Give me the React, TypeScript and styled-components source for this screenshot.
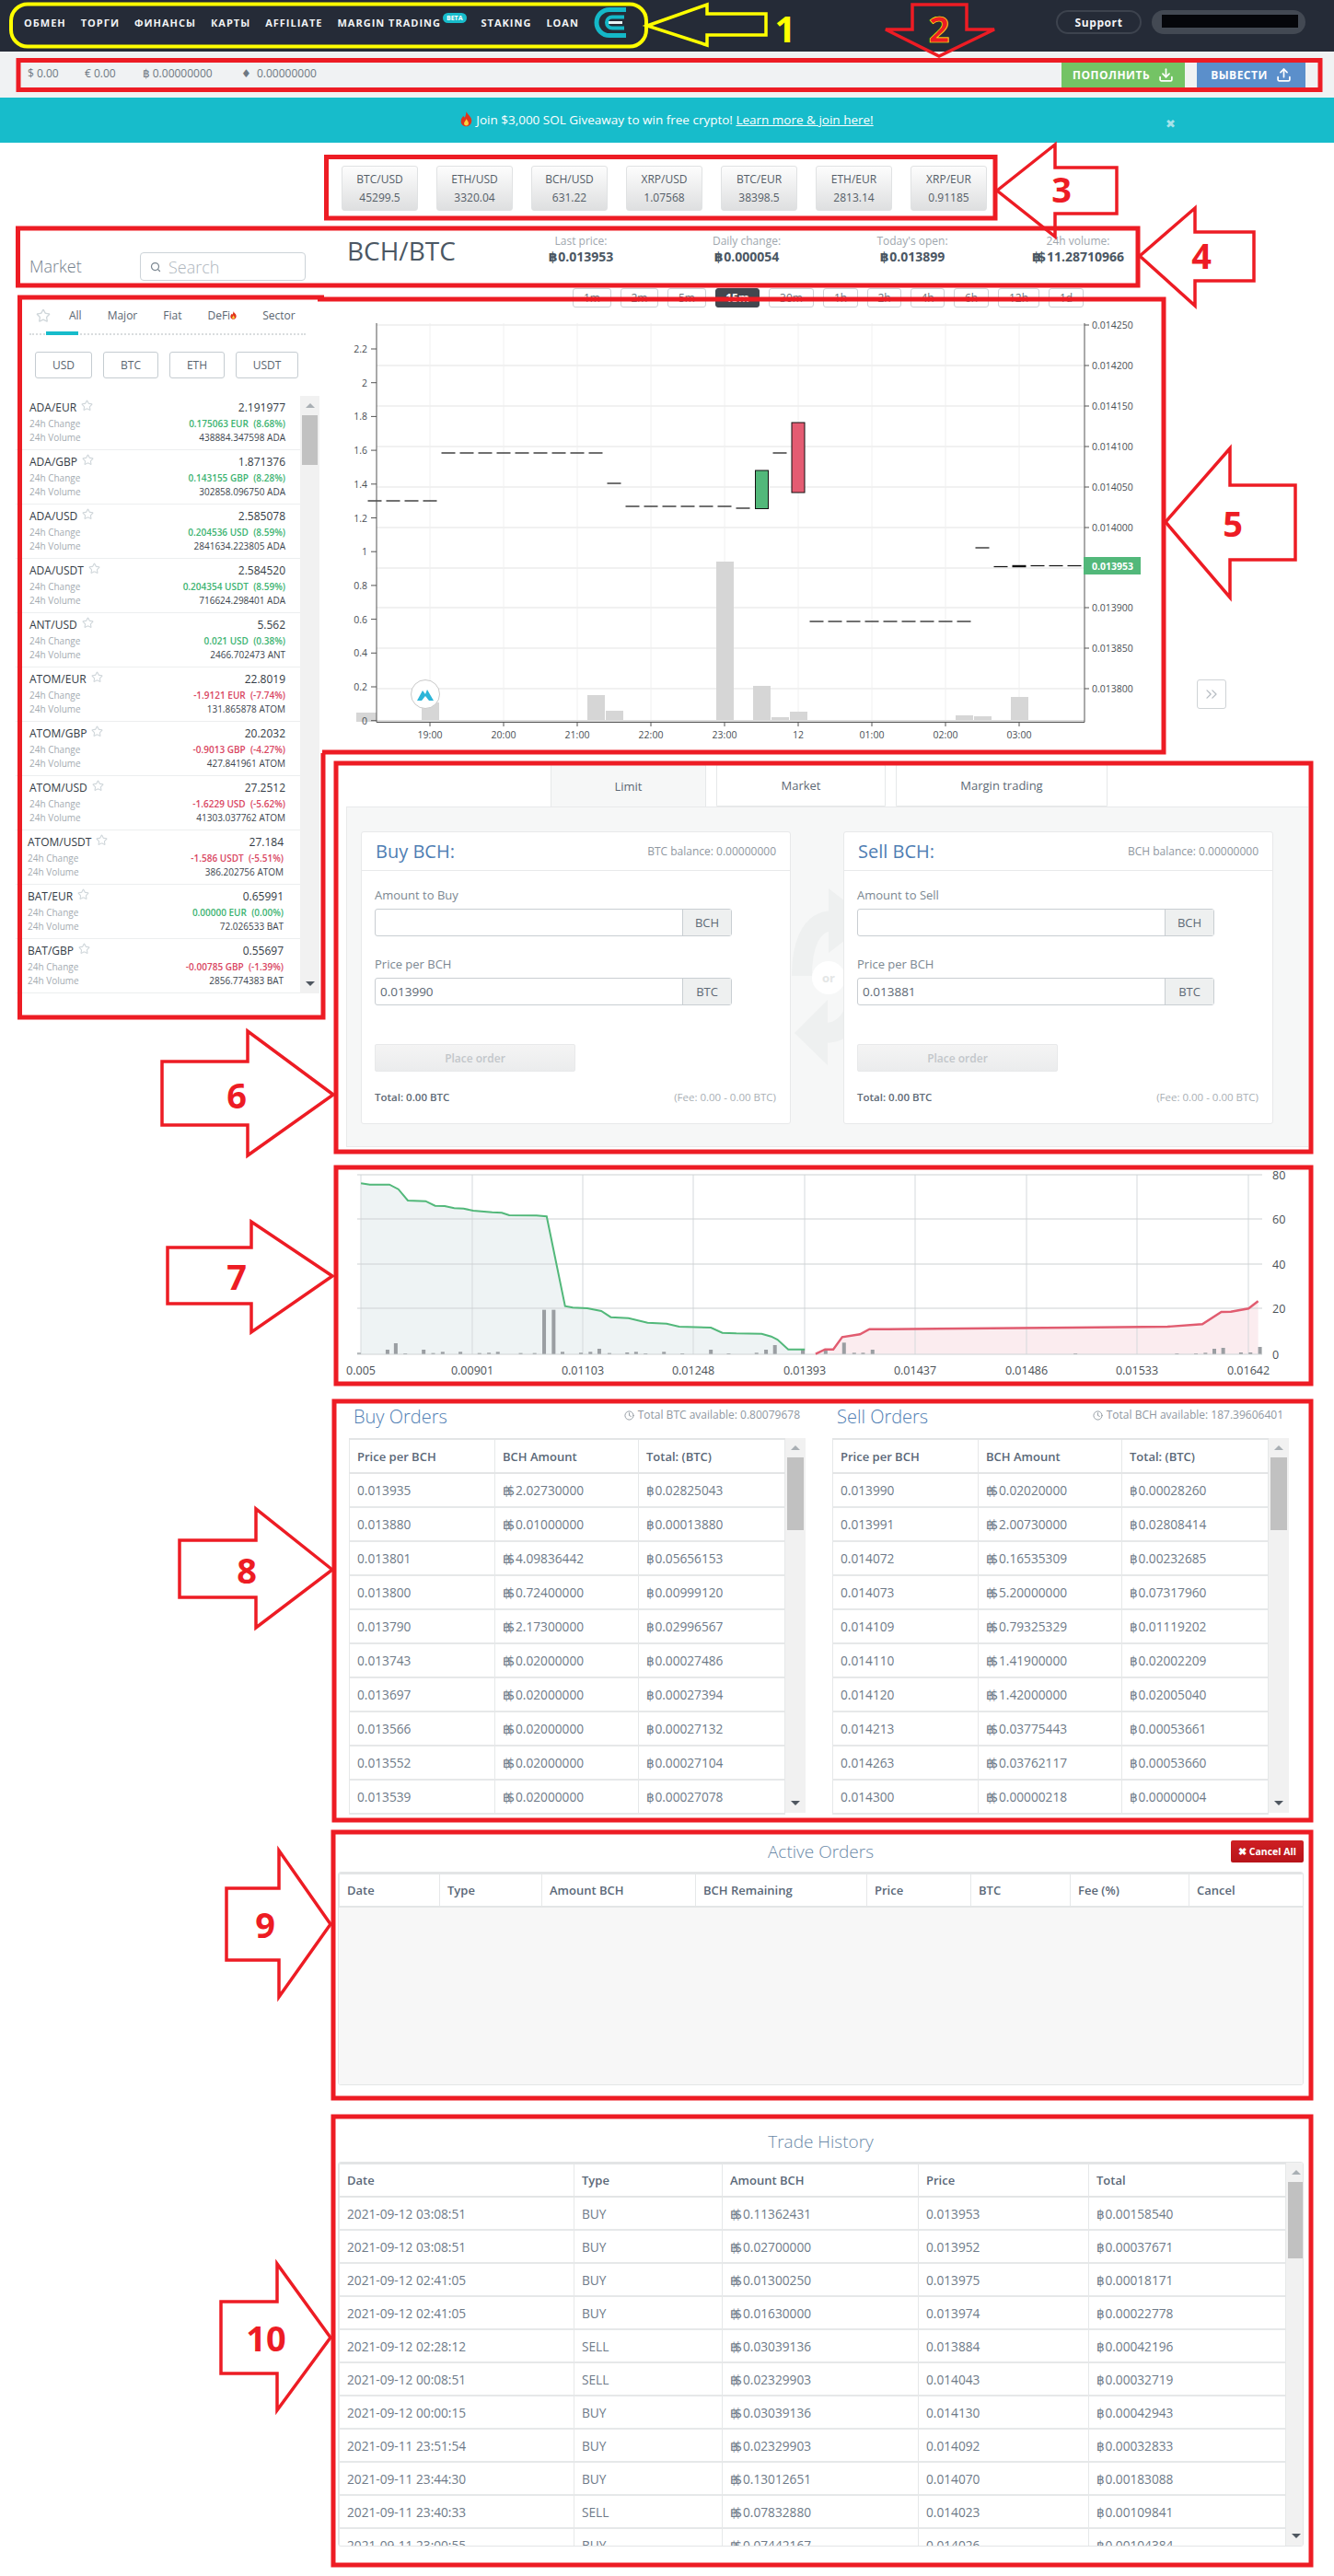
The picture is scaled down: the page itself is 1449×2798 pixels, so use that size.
import styled, { createGlobalStyle } from "styled-components";
import { ChevronsRight, Clock, Download, Search, Star, Upload } from "lucide-react";

const NAV = ["ОБМЕН", "ТОРГИ", "ФИНАНСЫ", "КАРТЫ", "AFFILIATE", "MARGIN TRADING", "STAKING", "LOAN"];
const TICKERS = [
  ["BTC/USD", "45299.5"],
  ["ETH/USD", "3320.04"],
  ["BCH/USD", "631.22"],
  ["XRP/USD", "1.07568"],
  ["BTC/EUR", "38398.5"],
  ["ETH/EUR", "2813.14"],
  ["XRP/EUR", "0.91185"],
];
const FRAMES = [
  ["1m", 42],
  ["2m", 41],
  ["5m", 42],
  ["15m", 48],
  ["30m", 49],
  ["1h", 38],
  ["2h", 37],
  ["4h", 37],
  ["6h", 38],
  ["12h", 45],
  ["1d", 38],
] as const;
const MARKETS = [
  ["ADA/EUR", "2.191977", "0.175063 EUR", "(8.68%)", "438884.347598 ADA"],
  ["ADA/GBP", "1.871376", "0.143155 GBP", "(8.28%)", "302858.096750 ADA"],
  ["ADA/USD", "2.585078", "0.204536 USD", "(8.59%)", "2841634.223805 ADA"],
  ["ADA/USDT", "2.584520", "0.204354 USDT", "(8.59%)", "716624.298401 ADA"],
  ["ANT/USD", "5.562", "0.021 USD", "(0.38%)", "2466.702473 ANT"],
  ["ATOM/EUR", "22.8019", "-1.9121 EUR", "(-7.74%)", "131.865878 ATOM"],
  ["ATOM/GBP", "20.2032", "-0.9013 GBP", "(-4.27%)", "427.841961 ATOM"],
  ["ATOM/USD", "27.2512", "-1.6229 USD", "(-5.62%)", "41303.037762 ATOM"],
  ["ATOM/USDT", "27.184", "-1.586 USDT", "(-5.51%)", "386.202756 ATOM"],
  ["BAT/EUR", "0.65991", "0.00000 EUR", "(0.00%)", "72.026533 BAT"],
  ["BAT/GBP", "0.55697", "-0.00785 GBP", "(-1.39%)", "2856.774383 BAT"],
];
const BUY_ORDERS = [
  ["0.013935", "2.02730000", "0.02825043"],
  ["0.013880", "0.01000000", "0.00013880"],
  ["0.013801", "4.09836442", "0.05656153"],
  ["0.013800", "0.72400000", "0.00999120"],
  ["0.013790", "2.17300000", "0.02996567"],
  ["0.013743", "0.02000000", "0.00027486"],
  ["0.013697", "0.02000000", "0.00027394"],
  ["0.013566", "0.02000000", "0.00027132"],
  ["0.013552", "0.02000000", "0.00027104"],
  ["0.013539", "0.02000000", "0.00027078"],
];
const SELL_ORDERS = [
  ["0.013990", "0.02020000", "0.00028260"],
  ["0.013991", "2.00730000", "0.02808414"],
  ["0.014072", "0.16535309", "0.00232685"],
  ["0.014073", "5.20000000", "0.07317960"],
  ["0.014109", "0.79325329", "0.01119202"],
  ["0.014110", "1.41900000", "0.02002209"],
  ["0.014120", "1.42000000", "0.02005040"],
  ["0.014213", "0.03775443", "0.00053661"],
  ["0.014263", "0.03762117", "0.00053660"],
  ["0.014300", "0.00000218", "0.00000004"],
];
const HISTORY = [
  ["2021-09-12 03:08:51", "BUY", "0.11362431", "0.013953", "0.00158540"],
  ["2021-09-12 03:08:51", "BUY", "0.02700000", "0.013952", "0.00037671"],
  ["2021-09-12 02:41:05", "BUY", "0.01300250", "0.013975", "0.00018171"],
  ["2021-09-12 02:41:05", "BUY", "0.01630000", "0.013974", "0.00022778"],
  ["2021-09-12 02:28:12", "SELL", "0.03039136", "0.013884", "0.00042196"],
  ["2021-09-12 00:08:51", "SELL", "0.02329903", "0.014043", "0.00032719"],
  ["2021-09-12 00:00:15", "BUY", "0.03039136", "0.014130", "0.00042943"],
  ["2021-09-11 23:51:54", "BUY", "0.02329903", "0.014092", "0.00032833"],
  ["2021-09-11 23:44:30", "BUY", "0.13012651", "0.014070", "0.00183088"],
  ["2021-09-11 23:40:33", "SELL", "0.07832880", "0.014023", "0.00109841"],
  ["2021-09-11 23:00:55", "BUY", "0.07442167", "0.014026", "0.00104384"],
];
const ACTIVE_COLS = [
  ["Date", 109],
  ["Type", 111],
  ["Amount BCH", 167],
  ["BCH Remaining", 186],
  ["Price", 113],
  ["BTC", 108],
  ["Fee (%)", 129],
  ["Cancel", 126],
] as const;

// candle chart, in page coordinates
const GRID_Y = [353, 397, 441, 485, 529, 573, 617, 660, 704, 748];
const PRICE_LABELS = ["0.014250", "0.014200", "0.014150", "0.014100", "0.014050", "0.014000", "", "0.013900", "0.013850", "0.013800"];
const HOURS = [
  [468, "19:00"],
  [548, "20:00"],
  [628, "21:00"],
  [708, "22:00"],
  [788, "23:00"],
  [868, "12"],
  [948, "01:00"],
  [1028, "02:00"],
  [1108, "03:00"],
] as const;
const VOLUME_LABELS = ["2.2", "2", "1.8", "1.6", "1.4", "1.2", "1", "0.8", "0.6", "0.4", "0.2", "0"];
const VOLUME_BARS = [
  [388, 774, 22],
  [459, 763, 19],
  [639, 755, 19],
  [659, 772, 19],
  [779, 610, 19],
  [819, 745, 19],
  [839, 779, 19],
  [859, 773, 19],
  [1039, 777, 19],
  [1059, 778, 19],
  [1099, 757, 19],
];
const range = (from: number, count: number) => Array.from({ length: count }, (_, i) => from + i * 20);
const DASHES: [number, number, number?][] = [
  [408, 544], [428, 544], [448, 544], [468, 544],
  ...range(488, 9).map((x): [number, number] => [x, 492]),
  [668, 525],
  ...range(688, 6).map((x): [number, number] => [x, 550]),
  [808, 552],
  [848, 492],
  ...range(888, 9).map((x): [number, number] => [x, 675]),
  [1068, 595],
  [1088, 615.5],
  [1108, 615, 2.4],
  [1128, 614.5], [1148, 614.5], [1168, 614.5],
];

// depth chart points as read off the crop, mapped to the page below
const toDepth = (pts: number[][]) => pts.map(([x, y]) => `${(360 + x / 1.452).toFixed(1)},${(1260 + y / 3).toFixed(1)}`).join(" ");
const GREEN_LINE = [[48, 76], [62, 80], [93, 80], [107, 95], [122, 132], [150, 134], [165, 149], [180, 150], [195, 157], [210, 158], [225, 165], [255, 170], [270, 172], [282, 180], [325, 181], [341, 184], [370, 476], [382, 481], [405, 483], [427, 492], [442, 512], [470, 515], [500, 530], [530, 533], [550, 543], [600, 546], [618, 563], [640, 565], [680, 566], [695, 575], [705, 585], [722, 617], [748, 617]];
const RED_LINE = [[765, 632], [780, 617], [793, 617], [807, 577], [835, 568], [850, 551], [880, 551], [1000, 549], [1170, 546], [1320, 543], [1375, 535], [1405, 495], [1420, 494], [1448, 484], [1463, 460]];
const DEPTH_BARS = [[45, 628], [90, 618], [103, 597], [118, 630], [147, 618], [162, 629], [177, 625], [205, 625], [235, 629], [250, 628], [264, 625], [300, 629], [322, 629], [337, 488], [352, 488], [366, 625], [395, 628], [410, 625], [424, 615], [440, 629], [468, 627], [482, 625], [497, 630], [526, 625], [555, 630], [600, 618], [628, 630], [672, 628], [687, 618], [701, 603], [745, 618], [781, 620], [810, 595], [826, 628], [840, 628], [855, 618], [1175, 630], [1335, 630], [1365, 630], [1380, 628], [1394, 615], [1408, 612], [1436, 627], [1451, 627], [1466, 609]];
const DEPTH_X = [
  [393, "0.005"],
  [514, "0.00901"],
  [634, "0.01103"],
  [754, "0.01248"],
  [875, "0.01393"],
  [995, "0.01437"],
  [1116, "0.01486"],
  [1236, "0.01533"],
  [1357, "0.01642"],
] as const;
const DEPTH_Y = [
  [1276, "80"],
  [1324, "60"],
  [1373, "40"],
  [1421, "20"],
  [1471, "0"],
] as const;

const ARROWS = [
  "1266,567 1336,487 1336,527 1407,527 1407,608 1336,608 1336,649",
  "1083,207 1146,157 1146,182 1213,182 1213,232 1146,232 1146,257",
  "1238,278 1298,226 1298,252 1362,252 1362,305 1298,305 1298,332",
  "962,32 991,32 991,5 1050,5 1050,32 1080,32 1020,61",
  "362,1189 269,1120 269,1153 176,1153 176,1222 269,1222 269,1255",
  "361,1386 273,1327 273,1355 182,1355 182,1416 273,1416 273,1447",
  "361,1705 278,1639 278,1673 195,1673 195,1735 278,1735 278,1768",
  "359,2090 303,2010 303,2051 246,2051 246,2129 303,2129 303,2169",
  "359,2539 301,2459 301,2500 240,2500 240,2578 301,2578 301,2618",
];
const MARKS = [
  [1153, 205, "3"],
  [1305, 277, "4"],
  [1339, 568, "5"],
  [257, 1189, "6"],
  [257, 1386, "7"],
  [268, 1705, "8"],
  [288, 2090, "9"],
  [289, 2539, "10"],
] as const;

const GlobalStyle = createGlobalStyle`
  * {
    box-sizing: border-box;
  }
  html, body {
    margin: 0;
    padding: 0;
    background: #fff;
  }
  body {
    font-family: "Open Sans", "Noto Sans", "DejaVu Sans", sans-serif;
    color: #5f6b78;
  }
  #root {
    width: 1449px;
    height: 2798px;
    overflow: hidden;
  }
`;

const Flame = ({ size }: { size: number }) => (
  <svg width={size} height={size * 1.25} viewBox="0 0 16 20">
    <path d="M8 0c1 4 6 6 7 11 1 5-3 9-7 9s-8-3-7-8c0-3 2-4 3-6 1 1 1 2 2 2 1-2 2-5 2-8z" fill="#e0341c" />
    <path d="M8 10c1 2 3 3 3 6 0 2-1 3-3 3s-3-1-3-3c0-2 2-3 3-6z" fill="#fbd13c" />
  </svg>
);

const Logo = () => (
  <svg width="36" height="33" viewBox="0 0 36 33">
    <path d="M35 2.5H17a14 14 0 0 0 0 28h18" fill="none" stroke="#14b8c8" strokeWidth="5" />
    <path d="M33 10.5H20a6 6 0 0 0 0 12h13" fill="none" stroke="#14b8c8" strokeWidth="4" />
    <path d="M16 16.5h15" stroke="#e8f4f6" strokeWidth="3" />
  </svg>
);

const BtcAmount = ({ value }: { value: string }) => (
  <>
    <Coin>฿</Coin>
    {value}
  </>
);

const BchAmount = ({ value }: { value: string }) => (
  <>
    <Coin $tight>฿</Coin>
    <Coin>$</Coin>
    {value}
  </>
);

const Scrollbar = ({ $width, $thumb }: { $width: number; $thumb: number }) => (
  <ScrollTrack $width={$width}>
    <ScrollArrow $up />
    <ScrollThumb $height={$thumb} />
    <ScrollArrow />
  </ScrollTrack>
);

const OrderBook = ({ title, note, rows }: { title: string; note: string; rows: string[][] }) => (
  <div>
    <BookHead>
      <PanelTitle>{title}</PanelTitle>
      <BookNote>
        <Clock size={11} />
        {note}
      </BookNote>
    </BookHead>
    <BookBody>
      <DataTable $width={473}>
        <colgroup>
          <col width={158} />
          <col width={156} />
          <col width={159} />
        </colgroup>
        <thead>
          <tr>
            <HeadCell $height={37}>Price per BCH</HeadCell>
            <HeadCell $height={37}>BCH Amount</HeadCell>
            <HeadCell $height={37}>Total: (BTC)</HeadCell>
          </tr>
        </thead>
        <tbody>
          {rows.map((row) => (
            <tr key={row[0]}>
              <Cell $height={37}>{row[0]}</Cell>
              <Cell $height={37}>
                <BchAmount value={row[1]} />
              </Cell>
              <Cell $height={37}>
                <BtcAmount value={row[2]} />
              </Cell>
            </tr>
          ))}
        </tbody>
      </DataTable>
      <Scrollbar $width={22} $thumb={79} />
    </BookBody>
  </div>
);

const OrderCard = ({ side, balance, price, quote }: { side: string; balance: string; price: string; quote: string }) => (
  <Card>
    <CardHead>
      <CardTitle>{side} BCH:</CardTitle>
      <CardNote>{balance}</CardNote>
    </CardHead>
    <CardBody>
      <FieldLabel>Amount to {side}</FieldLabel>
      <Field>
        <FieldInput readOnly value="" />
        <FieldUnit>BCH</FieldUnit>
      </Field>
      <FieldLabel>Price per BCH</FieldLabel>
      <Field>
        <FieldInput readOnly value={price} />
        <FieldUnit>{quote}</FieldUnit>
      </Field>
      <PlaceOrder disabled>Place order</PlaceOrder>
      <CardFoot>
        <TotalText>Total: 0.00 BTC</TotalText>
        <FeeText>(Fee: 0.00 - 0.00 BTC)</FeeText>
      </CardFoot>
    </CardBody>
  </Card>
);

const CandleChart = () => (
  <svg width="1087" height="496" viewBox="363 334 1087 496">
    {GRID_Y.map((y) => (
      <line key={y} x1="410" x2="1179" y1={y} y2={y} stroke="#ececec" strokeWidth="1.5" />
    ))}
    {HOURS.map(([x]) => (
      <line key={x} x1={x} x2={x} y1="351" y2="784" stroke="#f0f0f0" />
    ))}
    {VOLUME_BARS.map(([x, y, w]) => (
      <rect key={x} x={x} y={y} width={w} height={784 - y} fill="#d6d6d6" />
    ))}
    <line x1="410" x2="1179" y1="783" y2="783" stroke="#dcdcdc" strokeWidth="2" />
    {DASHES.map(([x, y, w]) => (
      <line key={x} x1={x - 7.5} x2={x + 7.5} y1={y} y2={y} stroke="#111" strokeWidth={w ?? 1.2} />
    ))}
    <rect x="821.5" y="511" width="14" height="41.5" fill="#52b87a" stroke="#111" />
    <rect x="861" y="459" width="14" height="76" fill="#e45c72" stroke="#111" />
    <path d="M410 351V784.5H1179V351" fill="none" stroke="#555" />
    {VOLUME_LABELS.map((label, i) => (
      <g key={label}>
        <line x1="404" x2="410" y1={379 + i * 36.7} y2={379 + i * 36.7} stroke="#555" />
        <AxisText x="400" y={379 + i * 36.7} textAnchor="end">
          {label}
        </AxisText>
      </g>
    ))}
    {GRID_Y.map((y, i) =>
      PRICE_LABELS[i] ? (
        <g key={y}>
          <line x1="1179" x2="1184" y1={y} y2={y} stroke="#555" />
          <AxisText x="1187" y={y}>
            {PRICE_LABELS[i]}
          </AxisText>
        </g>
      ) : null
    )}
    {HOURS.map(([x, label]) => (
      <g key={label}>
        <line x1={x} x2={x} y1="784" y2="789" stroke="#555" />
        <AxisText x={x} y="798" textAnchor="middle">
          {label}
        </AxisText>
      </g>
    ))}
    <rect x="1178" y="605" width="62" height="19" fill="#52b87a" />
    <PriceTag x="1187" y="614.5">
      0.013953
    </PriceTag>
    <circle cx="463" cy="754" r="15.5" fill="#fff" stroke="#c9c9c9" />
    <path d="M454 761l6-11 3 4 2-5 7 12z" fill="#2cb5d8" />
    <path d="M459 761l4-5 4 5z" fill="#fff" />
  </svg>
);

const DepthChart = () => (
  <svg width="1087" height="248" viewBox="363 1262 1087 248">
    <polygon points={`${toDepth(GREEN_LINE)} ${toDepth([[748, 632], [48, 632]])}`} fill="#eef3f4" />
    <polygon points={`${toDepth(RED_LINE)} ${toDepth([[1463, 632]])}`} fill="#fbecef" />
    {DEPTH_X.map(([x]) => (
      <line key={x} x1={x} x2={x} y1="1276" y2="1471" stroke="#d5d9dc" />
    ))}
    {DEPTH_Y.map(([y]) => (
      <line key={y} x1="389" x2="1372" y1={y} y2={y} stroke="#cdd1d4" strokeWidth="1.2" />
    ))}
    {DEPTH_BARS.map(([x, y]) => (
      <rect key={x} x={360 + (x - 3) / 1.452} y={1260 + y / 3} width="4" height={(632 - y) / 3} fill="#9a9ea2" />
    ))}
    <polyline points={toDepth(GREEN_LINE)} fill="none" stroke="#52b87a" strokeWidth="2" />
    <polyline points={toDepth(RED_LINE)} fill="none" stroke="#e15c70" strokeWidth="2.4" />
    {DEPTH_Y.map(([y, label]) => (
      <DepthText key={label} x="1383" y={y}>
        {label}
      </DepthText>
    ))}
    {DEPTH_X.map(([x, label]) => (
      <DepthText key={label} x={x} y="1488" textAnchor="middle">
        {label}
      </DepthText>
    ))}
  </svg>
);

const Notes = () => (
  <NoteLayer width="1449" height="2798" viewBox="0 0 1449 2798">
    <rect x="12" y="4.5" width="690" height="46" rx="18" fill="none" stroke="#ffff00" strokeWidth="4" />
    <polygon points="703,28 768,5 768,15 832,15 832,38 768,38 768,49" fill="none" stroke="#ffff00" strokeWidth="3.5" />
    <NoteMark x="853" y="30" fontSize="40" fill="#ffff00">
      1
    </NoteMark>
    <NoteFrame x="20" y="65.5" width="1414" height="32" />
    <NoteFrame x="354.5" y="170.5" width="726.5" height="66.5" />
    <NoteFrame x="19.5" y="248" width="1216.5" height="62" />
    <NotePath d="M352 323H21.5V1105H351V818" />
    <NotePath d="M345 325H1264V817H350" />
    <NoteFrame x="365" y="829" width="1059" height="422" />
    <NoteFrame x="365" y="1268" width="1059" height="235" />
    <NoteFrame x="363" y="1522" width="1061" height="455" />
    <NoteFrame x="362" y="1990" width="1062" height="289" />
    <NoteFrame x="362" y="2299" width="1062" height="487" />
    {ARROWS.map((points) => (
      <NoteArrow key={points} points={points} />
    ))}
    <NoteMark x="1020" y="30" fontSize="40" fill="#ed1c24" stroke="#ffff00" strokeWidth="0.7">
      2
    </NoteMark>
    {MARKS.map(([x, y, label]) => (
      <NoteMark key={label} x={x} y={y} fontSize="38" fill="#ed1c24">
        {label}
      </NoteMark>
    ))}
  </NoteLayer>
);

const App = () => (
  <Page>
    <GlobalStyle />
    <TopBar>
      <NavList>
        {NAV.map((item) => (
          <NavItem key={item}>
            {item}
            {item === "MARGIN TRADING" && <BetaBadge>BETA</BetaBadge>}
          </NavItem>
        ))}
        <Logo />
      </NavList>
      <TopRight>
        <SupportButton>Support</SupportButton>
        <AccountPill>
          <AccountMask />
        </AccountPill>
      </TopRight>
    </TopBar>

    <BalanceBar>
      <Balances>
        <BalanceItem $w={62}>$ 0.00</BalanceItem>
        <BalanceItem $w={63}>€ 0.00</BalanceItem>
        <BalanceItem $w={107}>฿ 0.00000000</BalanceItem>
        <BalanceItem $w={100}>♦ &nbsp;0.00000000</BalanceItem>
      </Balances>
      <BalanceActions>
        <MoneyButton $color="#74c365" $w={134}>
          ПОПОЛНИТЬ <Download size={17} strokeWidth={2.4} />
        </MoneyButton>
        <MoneyButton $color="#5b8fcb" $w={118}>
          ВЫВЕСТИ <Upload size={17} strokeWidth={2.4} />
        </MoneyButton>
      </BalanceActions>
    </BalanceBar>

    <Banner>
      <Flame size={13} />
      <span>
        Join $3,000 SOL Giveaway to win free crypto! <BannerLink>Learn more &amp; join here!</BannerLink>
      </span>
      <BannerClose>✖</BannerClose>
    </Banner>

    <Tickers>
      {TICKERS.map(([pair, price]) => (
        <Ticker key={pair}>
          <span>{pair}</span>
          <span>{price}</span>
        </Ticker>
      ))}
    </Tickers>

    <Main>
      <Sidebar>
        <MarketHead>
          <MarketTitle>Market</MarketTitle>
          <SearchBox>
            <Search size={12} strokeWidth={2.5} />
            <SearchInput placeholder="Search" />
          </SearchBox>
        </MarketHead>
        <MarketTabs>
          <Star size={16} color="#cfd6da" />
          <MarketTab>All</MarketTab>
          <MarketTab>Major</MarketTab>
          <MarketTab>Fiat</MarketTab>
          <MarketTab>
            DeFi
            <Flame size={7} />
          </MarketTab>
          <MarketTab>Sector</MarketTab>
        </MarketTabs>
        <Filters>
          <FilterButton $w={62}>USD</FilterButton>
          <FilterButton $w={60}>BTC</FilterButton>
          <FilterButton $w={60}>ETH</FilterButton>
          <FilterButton $w={68}>USDT</FilterButton>
        </Filters>
        <MarketList>
          <div>
            {MARKETS.map(([pair, price, change, pct, volume], i) => (
              <MarketRow key={pair} $shifted={i > 7}>
                <RowLine $height={18}>
                  <PairName>
                    {pair}
                    <Star size={13} color="#cfd6da" />
                  </PairName>
                  <PairPrice>{price}</PairPrice>
                </RowLine>
                <RowLine $height={17}>
                  <RowLabel>24h Change</RowLabel>
                  <RowChange $down={change.startsWith("-")}>
                    {change}&nbsp; {pct}
                  </RowChange>
                </RowLine>
                <RowLine $height={14}>
                  <RowLabel>24h Volume</RowLabel>
                  <RowVolume>{volume}</RowVolume>
                </RowLine>
              </MarketRow>
            ))}
          </div>
          <Scrollbar $width={21} $thumb={54} />
        </MarketList>
      </Sidebar>

      <Content>
        <PairHead>
          <PairTitle>BCH/BTC</PairTitle>
          <Stat>
            <StatLabel>Last price:</StatLabel>
            <StatValue>
              <BtcAmount value="0.013953" />
            </StatValue>
          </Stat>
          <Stat>
            <StatLabel>Daily change:</StatLabel>
            <StatValue>
              <BtcAmount value="0.000054" />
            </StatValue>
          </Stat>
          <Stat>
            <StatLabel>Today's open:</StatLabel>
            <StatValue>
              <BtcAmount value="0.013899" />
            </StatValue>
          </Stat>
          <Stat>
            <StatLabel>24h volume:</StatLabel>
            <StatValue>
              <BchAmount value="11.28710966" />
            </StatValue>
          </Stat>
        </PairHead>

        <Frames>
          {FRAMES.map(([frame, w]) => (
            <FrameButton key={frame} $w={w} $active={frame === "15m"}>
              {frame}
            </FrameButton>
          ))}
        </Frames>

        <ChartArea>
          <CandleChart />
          <ExpandButton>
            <ChevronsRight size={20} strokeWidth={1.5} />
          </ExpandButton>
        </ChartArea>

        <FormTabs>
          <FormTab $active $w={169}>
            Limit
          </FormTab>
          <FormTab $w={184}>Market</FormTab>
          <FormTab $w={230}>Margin trading</FormTab>
        </FormTabs>
        <FormPanel>
          <Watermark width="110" height="220" viewBox="850 950 110 220">
            <path d="M905 1000c-25 0-34 28-34 60" fill="none" stroke="#eef0f0" strokeWidth="22" />
            <polygon points="900,965 945,1000 900,1035" fill="#eef0f0" />
            <polygon points="899,1086 863,1122 899,1157" fill="#eef0f0" />
            <path d="M895 1122c30 0 38-28 38-60" fill="none" stroke="#eef0f0" strokeWidth="22" />
            <ellipse cx="900" cy="1062" rx="18" ry="18" fill="#fff" />
            <WatermarkText x="900" y="1062">
              or
            </WatermarkText>
          </Watermark>
          <OrderCard side="Buy" balance="BTC balance: 0.00000000" price="0.013990" quote="BTC" />
          <OrderCard side="Sell" balance="BCH balance: 0.00000000" price="0.013881" quote="BTC" />
        </FormPanel>

        <DepthArea>
          <DepthChart />
        </DepthArea>

        <Books>
          <OrderBook title="Buy Orders" note="Total BTC available: 0.80079678" rows={BUY_ORDERS} />
          <OrderBook title="Sell Orders" note="Total BCH available: 187.39606401" rows={SELL_ORDERS} />
        </Books>

        <ActiveHead>
          <span />
          <CenterTitle>Active Orders</CenterTitle>
          <CancelAll>✖ Cancel All</CancelAll>
        </ActiveHead>
        <TableFrame $height={232}>
          <DataTable $width={1049}>
            <colgroup>
              {ACTIVE_COLS.map(([name, w]) => (
                <col key={name} width={w} />
              ))}
            </colgroup>
            <thead>
              <tr>
                {ACTIVE_COLS.map(([name]) => (
                  <HeadCell key={name} $height={36}>
                    {name}
                  </HeadCell>
                ))}
              </tr>
            </thead>
          </DataTable>
          <EmptyBody />
        </TableFrame>

        <HistoryHead>
          <CenterTitle>Trade History</CenterTitle>
        </HistoryHead>
        <TableFrame $height={418} $row>
          <DataTable $width={1028}>
            <colgroup>
              <col width={255} />
              <col width={161} />
              <col width={213} />
              <col width={185} />
              <col width={214} />
            </colgroup>
            <thead>
              <tr>
                <HeadCell $height={36}>Date</HeadCell>
                <HeadCell $height={36}>Type</HeadCell>
                <HeadCell $height={36}>Amount BCH</HeadCell>
                <HeadCell $height={36}>Price</HeadCell>
                <HeadCell $height={36}>Total</HeadCell>
              </tr>
            </thead>
            <tbody>
              {HISTORY.map((row, i) => (
                <tr key={i}>
                  <Cell $height={36}>{row[0]}</Cell>
                  <Cell $height={36}>{row[1]}</Cell>
                  <Cell $height={36}>
                    <BchAmount value={row[2]} />
                  </Cell>
                  <Cell $height={36}>{row[3]}</Cell>
                  <Cell $height={36}>
                    <BtcAmount value={row[4]} />
                  </Cell>
                </tr>
              ))}
            </tbody>
          </DataTable>
          <Scrollbar $width={21} $thumb={83} />
        </TableFrame>
      </Content>
    </Main>

    <Notes />
  </Page>
);

const Page = styled.div`
  position: relative;
  width: 1449px;
  height: 2798px;
  overflow: hidden;
`;

const TopBar = styled.header`
  height: 56px;
  padding: 0 31px 0 26px;
  display: flex;
  align-items: center;
  justify-content: space-between;
  background: #252b37;
`;

const NavList = styled.nav`
  display: flex;
  align-items: center;
  gap: 16px;
  margin-top: -7px;
`;

const NavItem = styled.a`
  display: flex;
  align-items: center;
  color: #f1f3f5;
  font-size: 11px;
  font-weight: 700;
  letter-spacing: 1px;
  white-space: nowrap;
`;

const BetaBadge = styled.span`
  margin: -11px 0 0 2px;
  padding: 0 4px;
  height: 11px;
  border-radius: 6px;
  background: #17bccb;
  color: #fff;
  font-size: 7px;
  letter-spacing: 0;
  line-height: 11px;
`;

const TopRight = styled.div`
  display: flex;
  gap: 11px;
  margin-top: -8px;
`;

const SupportButton = styled.button`
  width: 93px;
  height: 26px;
  border: 2px solid #3d434e;
  border-radius: 13px;
  background: transparent;
  color: #f3f4f6;
  font: 700 12px "Open Sans", sans-serif;
  letter-spacing: 0.6px;
`;

const AccountPill = styled.div`
  width: 167px;
  height: 26px;
  padding: 5px 8px 0 11px;
  border-radius: 13px;
  background: #434953;
`;

const AccountMask = styled.div`
  height: 14px;
  background: #05060a;
`;

const BalanceBar = styled.div`
  height: 50px;
  padding: 12px 31px 0 30px;
  display: flex;
  justify-content: space-between;
  background: #f0f2f3;
`;

const Balances = styled.div`
  display: flex;
  height: 22px;
  align-items: center;
`;

const BalanceItem = styled.span<{ $w: number }>`
  width: ${(p) => p.$w}px;
  color: #6e7882;
  font-size: 12px;
  white-space: nowrap;
`;

const BalanceActions = styled.div`
  display: flex;
  gap: 13px;
`;

const MoneyButton = styled.button<{ $color: string; $w: number }>`
  width: ${(p) => p.$w}px;
  height: 27px;
  padding: 0;
  display: flex;
  align-items: center;
  justify-content: center;
  gap: 9px;
  border: none;
  background: ${(p) => p.$color};
  color: #fff;
  font: 700 12px "Open Sans", sans-serif;
  letter-spacing: 0.5px;
`;

const Banner = styled.div`
  position: relative;
  height: 49px;
  padding-bottom: 2px;
  display: flex;
  align-items: center;
  justify-content: center;
  gap: 4px;
  background: #17bccb;
  color: #fff;
  font-size: 13.5px;
`;

const BannerLink = styled.a`
  text-decoration: underline;
`;

const BannerClose = styled.span`
  position: absolute;
  left: 1266px;
  top: 19px;
  color: #a6e3ea;
  font-size: 13px;
`;

const Tickers = styled.div`
  margin: 25px 0 11px;
  padding-left: 371px;
  display: flex;
  gap: 20px;
`;

const Ticker = styled.div`
  width: 83px;
  height: 49px;
  display: flex;
  flex-direction: column;
  align-items: center;
  justify-content: center;
  gap: 3px;
  border: 1px solid #e0e2e3;
  border-radius: 3px;
  background: linear-gradient(#fdfdfd, #dedfe0);
  color: #545d67;
  font-size: 12px;
`;

const Main = styled.main`
  display: grid;
  grid-template-columns: 362px 1087px;
  align-items: start;
`;

const Sidebar = styled.aside`
  display: flex;
  flex-direction: column;
`;

const MarketHead = styled.div`
  height: 80px;
  padding: 34px 0 0 32px;
  display: flex;
  align-items: flex-start;
`;

const MarketTitle = styled.h2`
  width: 120px;
  margin: 0;
  color: #74808c;
  font-size: 18px;
  font-weight: 300;
  line-height: 31px;
`;

const SearchBox = styled.label`
  width: 180px;
  height: 31px;
  padding-left: 10px;
  display: flex;
  align-items: center;
  gap: 6px;
  border: 1px solid #ccd3d8;
  border-radius: 4px;
  color: #7b8791;
`;

const SearchInput = styled.input`
  width: 130px;
  border: none;
  outline: none;
  background: none;
  font: 300 18px "Open Sans", sans-serif;

  &::placeholder {
    color: #aeb6bd;
  }
`;

const MarketTabs = styled.div`
  position: relative;
  width: 300px;
  height: 44px;
  margin-left: 32px;
  padding: 3px 0 0 7px;
  display: flex;
  align-items: center;
  gap: 28px;
  border-bottom: 2px dotted #d9dcde;

  & > svg {
    margin-right: -8px;
  }

  &::after {
    content: "";
    position: absolute;
    left: 18px;
    bottom: -2px;
    width: 35px;
    height: 4px;
    background: #17bccb;
  }
`;

const MarketTab = styled.span`
  display: flex;
  align-items: center;
  color: #5a6570;
  font-size: 12px;
`;

const Filters = styled.div`
  margin: 18px 0 19px 38px;
  display: flex;
  gap: 12px;
`;

const FilterButton = styled.button<{ $w: number }>`
  width: ${(p) => p.$w}px;
  height: 29px;
  padding: 0;
  border: 1px solid #c5ccd1;
  border-radius: 3px;
  background: #fff;
  color: #5a6570;
  font: 12px "Open Sans", sans-serif;
`;

const MarketList = styled.div`
  margin-left: 17px;
  display: grid;
  grid-template-columns: 309px 21px;
`;

const MarketRow = styled.div<{ $shifted: boolean }>`
  height: 59px;
  padding: 3px ${(p) => (p.$shifted ? 18 : 16)}px 0 ${(p) => (p.$shifted ? 13 : 15)}px;
  border-bottom: 1px solid #eceeef;
`;

const RowLine = styled.div<{ $height: number }>`
  height: ${(p) => p.$height}px;
  display: flex;
  align-items: center;
  justify-content: space-between;
`;

const PairName = styled.span`
  display: flex;
  align-items: center;
  gap: 5px;
  color: #333b44;
  font-size: 12px;

  & > svg {
    margin-top: -3px;
  }
`;

const PairPrice = styled.span`
  color: #333b44;
  font-size: 12px;
`;

const RowLabel = styled.span`
  color: #a4abb1;
  font-size: 10px;
`;

const RowChange = styled.span<{ $down: boolean }>`
  color: ${(p) => (p.$down ? "#d9455f" : "#3cb371")};
  font-size: 10px;
  font-weight: 600;
`;

const RowVolume = styled.span`
  color: #3b444d;
  font-size: 10px;
`;

const ScrollTrack = styled.div<{ $width: number }>`
  width: ${(p) => p.$width}px;
  flex-shrink: 0;
  padding: 0 2px;
  display: flex;
  flex-direction: column;
  background: #f1f1f1;
`;

const ScrollArrow = styled.div<{ $up?: boolean }>`
  height: 21px;
  margin-top: ${(p) => (p.$up ? 0 : "auto")};
  display: flex;
  align-items: center;
  justify-content: center;

  &::before {
    content: "";
    border-left: 5px solid transparent;
    border-right: 5px solid transparent;
    ${(p) => (p.$up ? "border-bottom: 5px solid #a9afb4;" : "border-top: 5px solid #4f5760;")}
  }
`;

const ScrollThumb = styled.div<{ $height: number }>`
  height: ${(p) => p.$height}px;
  background: #c1c1c1;
`;

const Content = styled.div`
  display: flex;
  flex-direction: column;
`;

const PairHead = styled.div`
  height: 73px;
  padding: 13px 0 0 15px;
  display: flex;
`;

const PairTitle = styled.h1`
  width: 164px;
  margin: 0;
  color: #4b5763;
  font-size: 28px;
  font-weight: 400;
  line-height: 38px;
`;

const Stat = styled.div`
  width: 180px;
  display: flex;
  flex-direction: column;
  align-items: center;
`;

const StatLabel = styled.span`
  color: #a0a7ae;
  font-size: 12px;
  line-height: 17px;
`;

const StatValue = styled.span`
  color: #4b5763;
  font-size: 14px;
  font-weight: 700;
  line-height: 17px;
  white-space: nowrap;
`;

const Coin = styled.span<{ $tight?: boolean }>`
  font-family: "DejaVu Sans", sans-serif;
  margin-right: ${(p) => (p.$tight ? "-0.3em" : "0.05em")};
`;

const Frames = styled.div`
  height: 21px;
  padding-left: 260px;
  display: flex;
  gap: 10px;
`;

const FrameButton = styled.button<{ $active?: boolean; $w: number }>`
  width: ${(p) => p.$w}px;
  padding: 0;
  border: 1px solid ${(p) => (p.$active ? "#42474f" : "#ccd1d5")};
  border-radius: 3px;
  background: ${(p) => (p.$active ? "#42474f" : "#fff")};
  color: ${(p) => (p.$active ? "#fff" : "#6b7680")};
  font: ${(p) => (p.$active ? 700 : 400)} 12px "Open Sans", sans-serif;
`;

const ChartArea = styled.section`
  position: relative;
  height: 496px;

  & > svg {
    display: block;
  }
`;

const AxisText = styled.text`
  fill: #4a4f55;
  font: 10.5px "Open Sans", sans-serif;
  dominant-baseline: central;
`;

const PriceTag = styled.text`
  fill: #fff;
  font: 700 10.5px "Open Sans", sans-serif;
  dominant-baseline: central;
`;

const ExpandButton = styled.button`
  position: absolute;
  left: 938px;
  top: 404px;
  width: 32px;
  height: 32px;
  padding: 0;
  display: flex;
  align-items: center;
  justify-content: center;
  border: 1px solid #cfd3d6;
  border-radius: 3px;
  background: #fff;
  color: #b6bcc2;
`;

const FormTabs = styled.div`
  padding-left: 236px;
  height: 46px;
  display: flex;
  gap: 11px;
`;

const FormTab = styled.div<{ $active?: boolean; $w: number }>`
  position: relative;
  width: ${(p) => p.$w}px;
  height: ${(p) => (p.$active ? 47 : 46)}px;
  display: flex;
  align-items: center;
  justify-content: center;
  border: 1px solid #e6e8e9;
  border-bottom: ${(p) => (p.$active ? "none" : "1px solid #e6e8e9")};
  border-radius: 2px 2px 0 0;
  background: ${(p) => (p.$active ? "#f6f7f7" : "#fff")};
  color: #5d6975;
  font-size: 13px;
`;

const FormPanel = styled.div`
  position: relative;
  width: 1045px;
  height: 370px;
  margin-left: 14px;
  padding: 26px 0 0 15px;
  display: flex;
  gap: 57px;
  border: 1px solid #e8e9ea;
  border-right: none;
  background: #f6f7f7;
`;

const Watermark = styled.svg`
  position: absolute;
  left: 473px;
  top: 73px;
`;

const WatermarkText = styled.text`
  fill: #e4e6e6;
  font: 700 13px "Open Sans", sans-serif;
  text-anchor: middle;
  dominant-baseline: central;
`;

const Card = styled.div`
  position: relative;
  width: 467px;
  height: 318px;
  border: 1px solid #e8e9ea;
  border-radius: 3px;
  background: #fff;
`;

const CardHead = styled.div`
  height: 42px;
  padding: 0 15px;
  display: flex;
  align-items: center;
  justify-content: space-between;
  border-bottom: 1px solid #e8e9ea;
`;

const CardTitle = styled.h3`
  margin: 0;
  color: #4f7eb3;
  font-size: 20px;
  font-weight: 400;
`;

const CardNote = styled.span`
  color: #8f979f;
  font-size: 12px;
`;

const CardBody = styled.div`
  padding: 17px 15px 0 14px;
`;

const FieldLabel = styled.label`
  display: block;
  margin-bottom: 6px;
  color: #7b8791;
  font-size: 13px;
  line-height: 18px;
`;

const Field = styled.div`
  width: 388px;
  height: 30px;
  margin-bottom: 21px;
  display: flex;
  border: 1px solid #c9ced2;
  border-radius: 3px;
`;

const FieldInput = styled.input`
  flex: 1;
  min-width: 0;
  padding: 0 5px;
  border: none;
  outline: none;
  background: none;
  color: #5d6975;
  font: 13.5px "Open Sans", sans-serif;
`;

const FieldUnit = styled.span`
  width: 53px;
  display: flex;
  align-items: center;
  justify-content: center;
  border-left: 1px solid #c9ced2;
  background: #eef0f0;
  color: #5d6975;
  font-size: 13px;
`;

const PlaceOrder = styled.button`
  display: block;
  width: 218px;
  height: 30px;
  margin-top: 42px;
  border: 1px solid #e8e9ea;
  border-radius: 2px;
  background: linear-gradient(#f4f4f4, #ebeced);
  color: #c2c6ca;
  font: 600 12px "Open Sans", sans-serif;
`;

const CardFoot = styled.div`
  margin-top: 20px;
  display: flex;
  justify-content: space-between;
`;

const TotalText = styled.span`
  color: #5d6975;
  font-size: 11.5px;
  font-weight: 600;
`;

const FeeText = styled.span`
  color: #a9afb5;
  font-size: 11.5px;
`;

const DepthArea = styled.section`
  height: 264px;
  padding-top: 16px;

  & > svg {
    display: block;
  }
`;

const DepthText = styled.text`
  fill: #4a4f55;
  font: 12.5px "Open Sans", sans-serif;
  dominant-baseline: central;
`;

const Books = styled.section`
  width: 1020px;
  margin: 15px 0 0 17px;
  display: grid;
  grid-template-columns: 495px 495px;
  column-gap: 30px;
`;

const BookHead = styled.div`
  height: 37px;
  padding: 2px 5px 0 5px;
  display: flex;
  align-items: flex-start;
  justify-content: space-between;
`;

const PanelTitle = styled.h3`
  margin: 0;
  color: #4f7eb3;
  font-size: 20px;
  font-weight: 300;
  line-height: 24px;
`;

const BookNote = styled.span`
  display: flex;
  align-items: center;
  gap: 4px;
  color: #8f979f;
  font-size: 12px;
  line-height: 20px;
`;

const BookBody = styled.div`
  display: flex;
  height: 407px;
`;

const DataTable = styled.table<{ $width: number }>`
  width: ${(p) => p.$width}px;
  height: fit-content;
  flex-shrink: 0;
  table-layout: fixed;
  border-collapse: collapse;
`;

const HeadCell = styled.th<{ $height: number }>`
  height: ${(p) => p.$height}px;
  padding: 0 8px;
  border-right: 1px solid #e6e8e9;
  border-bottom: 2px solid #e3e5e6;
  border-top: 2px solid #e3e5e6;
  color: #5a6878;
  font-size: 13px;
  font-weight: 600;
  text-align: left;
  white-space: nowrap;

  &:first-child {
    border-left: 1px solid #e6e8e9;
  }
`;

const Cell = styled.td<{ $height: number }>`
  height: ${(p) => p.$height}px;
  padding: 0 8px;
  border-right: 1px solid #e6e8e9;
  border-bottom: 2px solid #e6e8e9;
  color: #6e7a88;
  font-size: 13.7px;
  white-space: nowrap;

  &:first-child {
    border-left: 1px solid #e6e8e9;
  }
`;

const ActiveHead = styled.div`
  width: 1049px;
  height: 34px;
  margin: 30px 0 0 5px;
  display: grid;
  grid-template-columns: 1fr auto 1fr;
  align-items: start;
`;

const CenterTitle = styled.h3`
  margin: 0;
  color: #6b8aa8;
  font-size: 19px;
  font-weight: 300;
  line-height: 24px;
  text-align: center;
`;

const CancelAll = styled.button`
  justify-self: end;
  width: 79px;
  height: 24px;
  padding: 0;
  border: none;
  border-radius: 2px;
  background: linear-gradient(#cf1f23, #b7141a);
  color: #fff;
  font: 700 10.5px "Open Sans", sans-serif;
`;

const TableFrame = styled.div<{ $height: number; $row?: boolean }>`
  width: 1049px;
  height: ${(p) => p.$height}px;
  margin-left: 5px;
  display: flex;
  flex-direction: ${(p) => (p.$row ? "row" : "column")};
  overflow: hidden;
  border: 1px solid #e3e5e6;
  border-radius: 3px;
`;

const EmptyBody = styled.div`
  flex: 1;
  background: #f7f7f7;
`;

const HistoryHead = styled.div`
  width: 1049px;
  height: 43px;
  margin: 40px 0 0 5px;
  padding-top: 9px;
`;

const NoteLayer = styled.svg`
  position: absolute;
  left: 0;
  top: 0;
  pointer-events: none;
`;

const NoteFrame = styled.rect`
  fill: none;
  stroke: #ed1c24;
  stroke-width: 5;
`;

const NotePath = styled.path`
  fill: none;
  stroke: #ed1c24;
  stroke-width: 5;
`;

const NoteArrow = styled.polygon`
  fill: none;
  stroke: #ed1c24;
  stroke-width: 3.5;
`;

const NoteMark = styled.text`
  font-family: "Open Sans", sans-serif;
  font-weight: 700;
  text-anchor: middle;
  dominant-baseline: central;
`;

export default App;
